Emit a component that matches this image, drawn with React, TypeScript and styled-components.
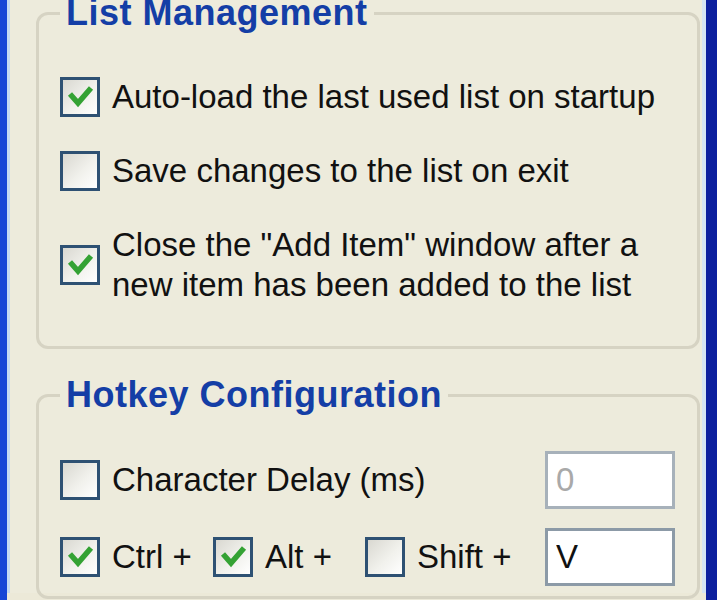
import React, { FC } from 'react';
import styled, { createGlobalStyle } from 'styled-components';

const GlobalStyle = createGlobalStyle`
    html, body {
        margin: 0;
        padding: 0;
        background: #ece9d8;
    }
`;

const Window = styled.div`
    height: 600px;
    overflow: hidden;
    border-left: 7px solid #1646d6;
    border-right: 11px solid #0c1f9e;
    box-sizing: border-box;
`;

const Client = styled.div`
    height: 100%;
    box-sizing: border-box;
    border-left: 3px solid #c4daf2;
    border-right: 4px solid #d5e4f3;
    background: #edebdc;
    padding: 0 2px 0 26px;
    font-family: 'Liberation Sans', Arial, sans-serif;
    font-size: 33px;
    color: #111;
`;

const Group = styled.fieldset<{ $first?: boolean; $padTop: number; $padBottom: number }>`
    margin: ${(p) => (p.$first ? '-7px' : '26px')} 0 0 0;
    padding: ${(p) => p.$padTop}px 22px ${(p) => p.$padBottom}px 21px;
    border: 3px solid #d6d3c3;
    border-radius: 12px;
    min-width: 0;
`;

const Legend = styled.legend`
    padding: 0 6px;
    font-weight: bold;
    font-size: 36px;
    line-height: 40px;
    letter-spacing: 0.5px;
    color: #143ea6;
`;

const Stack = styled.div<{ $gap: number }>`
    display: flex;
    flex-direction: column;
    gap: ${(p) => p.$gap}px;
`;

const Row = styled.div`
    display: flex;
    align-items: center;
    height: 58px;
`;

const CheckLabel = styled.label<{ $width?: number }>`
    display: flex;
    align-items: center;
    gap: 12px;
    line-height: 40px;
    white-space: nowrap;
    ${(p) => (p.$width ? `width: ${p.$width}px; flex: none;` : 'flex: 1;')}
`;

const Box = styled.span`
    flex: none;
    position: relative;
    width: 40px;
    height: 40px;
    box-sizing: border-box;
    border: 3px solid #2e5173;
    background: linear-gradient(135deg, #d9d8d1 0%, #f1f1ec 55%, #ffffff 100%);

    svg {
        position: absolute;
        left: -3px;
        top: -3px;
    }
`;

const Field = styled.input<{ $dim?: boolean }>`
    flex: none;
    width: 130px;
    height: 58px;
    box-sizing: border-box;
    border: 3px solid ${(p) => (p.$dim ? '#a7b1ba' : '#8c9aa7')};
    background: #fff;
    padding: 0 0 0 8px;
    font: 33px 'Liberation Sans', Arial, sans-serif;
    color: ${(p) => (p.$dim ? '#a9a9a9' : '#111')};
    outline: none;
`;

const CheckBox: FC<{ checked?: boolean }> = ({ checked }) => (
    <Box>
        {checked && (
            <svg width="40" height="40" viewBox="0 0 40 40">
                <polyline
                    points="10,17 18,26 31,11"
                    fill="none"
                    stroke="#34a234"
                    strokeWidth="5.5"
                    strokeLinejoin="miter"
                />
            </svg>
        )}
    </Box>
);

const Option: FC<{ checked?: boolean; children: React.ReactNode; width?: number }> = ({
    checked,
    children,
    width,
}) => (
    <CheckLabel $width={width}>
        <CheckBox checked={checked} />
        <span>{children}</span>
    </CheckLabel>
);

export default function App() {
    return (
        <Window>
            <GlobalStyle />
            <Client>
                <Group $first $padTop={44} $padBottom={41}>
                    <Legend>List Management</Legend>
                    <Stack $gap={34}>
                        <Option checked>Auto-load the last used list on startup</Option>
                        <Option>Save changes to the list on exit</Option>
                        <Option checked>
                            Close the "Add Item" window after a<br />
                            new item has been added to the list
                        </Option>
                    </Stack>
                </Group>
                <Group $padTop={36} $padBottom={10}>
                    <Legend>Hotkey Configuration</Legend>
                    <Stack $gap={19}>
                        <Row>
                            <Option>Character Delay (ms)</Option>
                            <Field $dim readOnly value="0" />
                        </Row>
                        <Row>
                            <Option checked width={153}>Ctrl +</Option>
                            <Option checked width={152}>Alt +</Option>
                            <Option>Shift +</Option>
                            <Field readOnly value="V" />
                        </Row>
                    </Stack>
                </Group>
            </Client>
        </Window>
    );
}
